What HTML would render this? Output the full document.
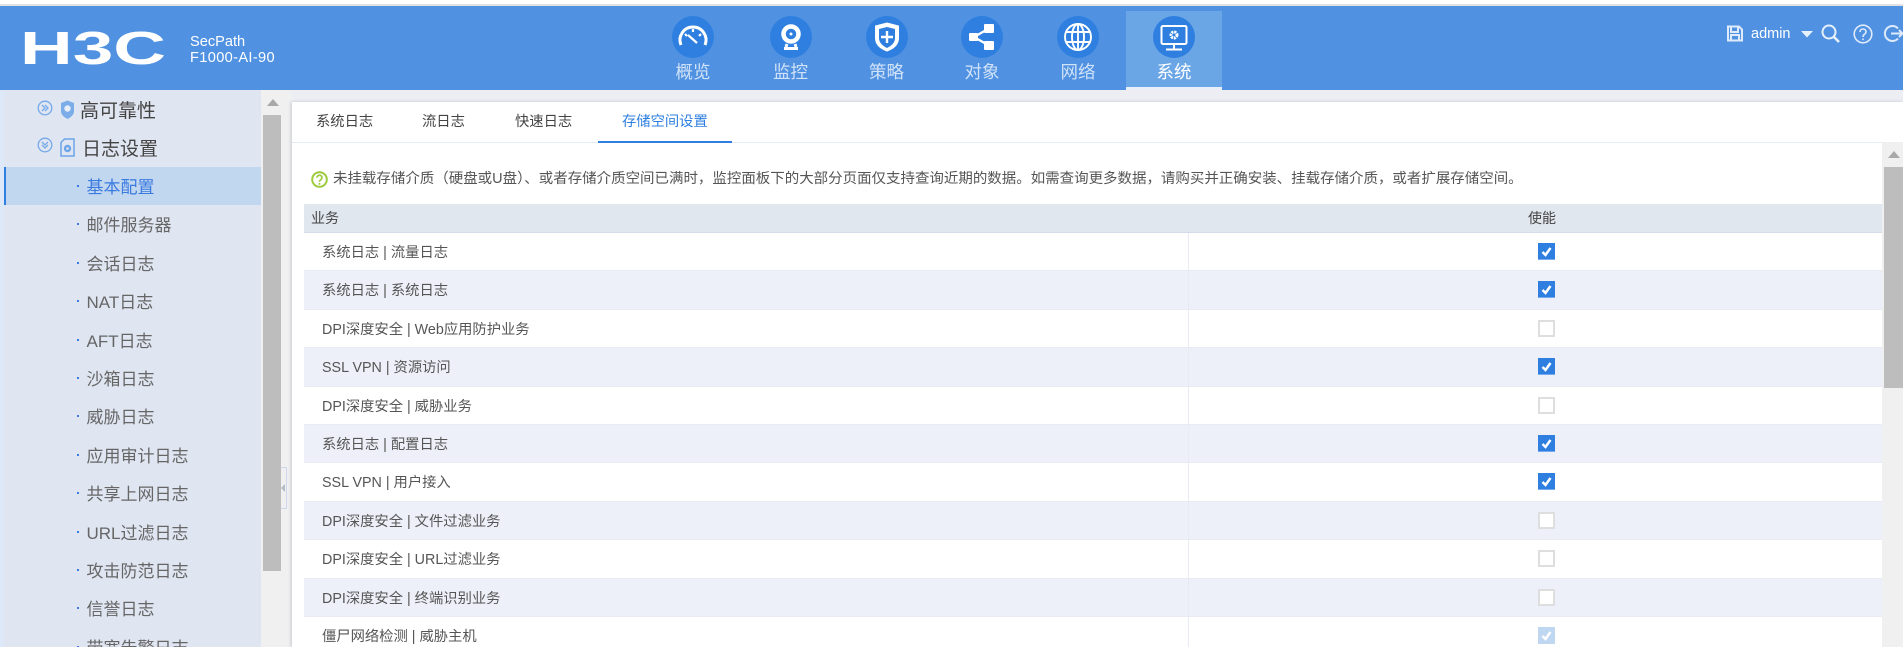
<!DOCTYPE html>
<html lang="zh"><head><meta charset="utf-8"><title>H3C SecPath</title>
<style>
*{box-sizing:border-box}
html,body{margin:0;padding:0;width:1903px;height:647px;overflow:hidden;background:#fff;font-family:"Liberation Sans","Noto Sans CJK SC",sans-serif}
body{position:relative}
.a{position:absolute}
#top{left:0;top:4px;width:1903px;height:2px;background:#e2e2e2}
#hd{left:0;top:6px;width:1903px;height:84px;background:#5092e1}
.nav{position:absolute;top:11px;width:96px;height:79px;text-align:center;color:#cfe2f8;font-size:17.5px}
.nav.on{background:#6aa5e6;color:#fff;border-bottom:3px solid #e9eff8}
.nav i{position:absolute;left:27px;top:5px;width:42px;height:42px;border-radius:50%;background:#2e7fe0;display:block}
.nav svg{position:absolute;left:0;top:0}
.nav span{position:absolute;left:0;width:96px;top:48px;line-height:26px}
#bg{left:0;top:90px;width:1903px;height:557px;background:#eceef3}
#edge{left:0;top:90px;width:4px;height:557px;background:#dde8f8}
#side{left:4px;top:90px;width:257px;height:557px;background:#dfe5f1;overflow:hidden}
.it{position:absolute;left:0;width:257px;height:38px;line-height:41.500px;font-size:17px;color:#666;padding-left:82.500px}
.it:before{content:"";position:absolute;left:73px;top:18px;width:2px;height:2px;background:#3b7be0}
.it.on{background:#c1d6ef;color:#3b7be0;border-left:2px solid #2e7fe0;padding-left:80.500px}
.it.on:before{left:71px}
.l1{position:absolute;font-size:19px;color:#444;line-height:26px}
#sb1{left:261px;top:90px;width:31px;height:557px;background:#f0f0f0}
#thumb1{left:263px;top:115px;width:18px;height:456px;background:#bdbdbd}
#card{left:292px;top:102px;width:1611px;height:545px;background:#fff;box-shadow:-1px 0 3px rgba(120,130,150,.35)}
.tab{position:absolute;top:110px;font-size:14.300px;line-height:24px;color:#444}
#tl{left:292px;top:142px;width:1611px;height:1px;background:#e6ecf3}
#ul{left:598px;top:141px;width:134px;height:2px;background:#2e7fe0}
#note{left:333px;top:169px;font-size:14.470px;line-height:20px;color:#555;white-space:nowrap}
#th{left:304px;top:204px;width:1578px;height:29px;background:#e1e7ef;border-bottom:1px solid #d5dbe8;font-size:14px;line-height:29px;color:#444}
#rows{left:304px;top:233px;width:1578px;height:414px;overflow:hidden}
.r{height:38.400px;line-height:41px;font-size:14.300px;color:#555;padding-left:18px;border-bottom:1px solid #e8ecf2;position:relative;white-space:nowrap}
.r:nth-child(even){background:#edf0f8}
.r:last-child{height:40px;border-bottom:0}
.r:after{content:"";position:absolute;left:884px;top:0;bottom:0;width:1px;background:#e8ecf2}
.c{position:absolute;left:1234px;top:10px;width:17px;height:17px;border:2px solid #dedede;background:#fff}
.c.y{background:#2e7fe0;border:0;border-bottom:1px solid #74aaf0}
.c.d{background:#c0d7f2;border:0}
.c svg{position:absolute;left:0;top:0}
#sb2{left:1882px;top:142px;width:21px;height:505px;background:#f0f0f0}
#thumb2{left:1884px;top:167px;width:19px;height:221px;background:#bdbdbd}
</style></head><body>
<div class="a" id="top"></div>
<div class="a" id="hd"></div>

<svg class="a" style="left:20px;top:28px" width="150" height="40" viewBox="0 0 150 40"><text x="0" y="36" font-family="Liberation Sans" font-weight="700" font-size="46" fill="#fff" textLength="146" lengthAdjust="spacingAndGlyphs">H3C</text></svg>
<div class="a" style="left:190px;top:33.500px;font-size:14.600px;line-height:16.500px;color:#fff;white-space:nowrap">SecPath<br><span style="letter-spacing:.35px">F1000-AI-90</span></div>

<div class="nav" style="left:645px"><i></i><svg width="96" height="50" fill="none" stroke="#fff" stroke-width="2.200"><path d="M36 34a13 13 0 1 1 24 0" stroke-width="3"/><path d="M40 23l2 2M48 18v3M56 23l-2 2M43 24l9 8" stroke-width="2.200"/></svg><span>概览</span></div>
<div class="nav" style="left:742.500px"><i></i><svg width="96" height="50" fill="none" stroke="#fff"><circle cx="48" cy="23" r="7.500" stroke-width="4.500"/><circle cx="48" cy="23" r="1.500" fill="#fff" stroke="none"/><path d="M44 33l-1 3M52 33l1 3M41 37.500h14" stroke-width="3"/></svg><span>监控</span></div>
<div class="nav" style="left:838.500px"><i></i><svg width="96" height="50" fill="none" stroke="#fff"><path d="M36.500 15l11.500-3 11.500 3v12c0 7-6 11-11.500 13-5.500-2-11.500-6-11.500-13z" fill="#fff"/><path d="M40 18l8-2 8 2v9c0 5-4 8-8 10-4-2-8-5-8-10z" fill="#2e7fe0" stroke="none"/><path d="M48 20v12M42 26h12" stroke="#fff" stroke-width="2.400"/></svg><span>策略</span></div>
<div class="nav" style="left:934px"><i></i><svg width="96" height="50" fill="#fff" stroke="#fff" stroke-width="2.400"><path d="M40 26l14-8M40 26l14 8" fill="none"/><rect x="35" y="22" width="9" height="8" rx="1" stroke="none"/><rect x="50" y="13" width="10" height="9" rx="1" stroke="none"/><rect x="50" y="30" width="10" height="9" rx="1" stroke="none"/></svg><span>对象</span></div>
<div class="nav" style="left:1030px"><i></i><svg width="96" height="50" fill="none" stroke="#fff" stroke-width="1.900"><circle cx="48" cy="26" r="13"/><ellipse cx="48" cy="26" rx="6" ry="13"/><path d="M48 13v26M36 21h24M36 31h24"/></svg><span>网络</span></div>
<div class="nav on" style="left:1126px"><i></i><svg width="96" height="50" fill="none" stroke="#fff" stroke-width="2"><rect x="35.500" y="15" width="25" height="18" rx="1.500"/><circle cx="48" cy="24" r="3" stroke-width="3" stroke-dasharray="2 .8"/><path d="M48 33v4.500M40 38.500h16"/></svg><span>系统</span></div>

<svg class="a" style="left:1727px;top:25px" width="16" height="17" fill="none" stroke="#dfeafa" stroke-width="2"><path d="M1 1.500h11l3 3v11H1zM4 2v5h7V2M4 15v-5h8v5"/></svg>
<div class="a" style="left:1751px;top:24px;font-size:14.500px;line-height:20px;color:#fff">admin</div>
<svg class="a" style="left:1800px;top:30px" width="14" height="8"><path d="M1 1h12L7 7.500z" fill="#e6f0fb"/></svg>
<svg class="a" style="left:1821px;top:24px" width="19" height="19" fill="none" stroke="#e6f0fb" stroke-width="2"><circle cx="8" cy="8" r="6.500"/><path d="M12.500 12.500L18 18" stroke-width="2.600"/></svg>
<svg class="a" style="left:1853px;top:24px" width="20" height="20" fill="none" stroke="#dfeafa" stroke-width="1.600"><circle cx="10" cy="10" r="8.800"/><path d="M7 8c0-4 6-4 6 0 0 2-3 2-3 5M10 14.500v1.600"/></svg>
<svg class="a" style="left:1883px;top:24px" width="20" height="19" fill="none" stroke="#dfeafa" stroke-width="2"><path d="M15 4.500a7.500 7.500 0 1 0 0 10M8 9.500h11"/><path d="M16 6l3.500 3.500L16 13"/></svg>

<div class="a" id="bg"></div>
<div class="a" id="edge"></div>
<div class="a" id="side">
<div class="it on" style="top:77px">基本配置</div>
<div class="it" style="top:115px">邮件服务器</div>
<div class="it" style="top:154px">会话日志</div>
<div class="it" style="top:192px">NAT日志</div>
<div class="it" style="top:231px">AFT日志</div>
<div class="it" style="top:269px">沙箱日志</div>
<div class="it" style="top:307px">威胁日志</div>
<div class="it" style="top:346px">应用审计日志</div>
<div class="it" style="top:384px">共享上网日志</div>
<div class="it" style="top:423px">URL过滤日志</div>
<div class="it" style="top:461px">攻击防范日志</div>
<div class="it" style="top:499px">信誉日志</div>
<div class="it" style="top:538px">带宽告警日志</div>
</div>
<svg class="a" style="left:37px;top:100px" width="16" height="16" fill="none" stroke="#76a9ea" stroke-width="1.300"><circle cx="8" cy="8" r="6.800"/><path d="M5 5l3 3-3 3M8 5l3 3-3 3"/></svg>
<svg class="a" style="left:60px;top:100px" width="15" height="19"><path d="M1 3l6.500-2.500L14 3v8c0 4-3 6-6.500 8C4 17 1 15 1 11z" fill="#7bade9"/><circle cx="7.500" cy="8.500" r="3.200" fill="#e8eef8"/></svg>
<div class="l1" style="left:80px;top:98.500px">高可靠性</div>
<svg class="a" style="left:37px;top:137px" width="16" height="16" fill="none" stroke="#76a9ea" stroke-width="1.300"><circle cx="8" cy="8" r="6.800"/><path d="M5 5l3 3 3-3M5 8l3 3 3-3"/></svg>
<svg class="a" style="left:60px;top:138px" width="15" height="19" fill="none" stroke="#6ea5e8" stroke-width="1.500"><path d="M4.500 1H14v17H1V4.500z"/><circle cx="7.500" cy="10.500" r="2.500" stroke-width="2.400"/></svg>
<div class="l1" style="left:82px;top:136.500px">日志设置</div>

<div class="a" id="sb1"></div>
<svg class="a" style="left:267px;top:99px" width="12" height="8"><path d="M0 7L6 0l6 7z" fill="#a8a8a8"/></svg>
<div class="a" id="thumb1"></div>
<div class="a" style="left:281px;top:467px;width:6px;height:42px;border:1px solid #cdd8ef;border-left:0;background:#f0f0f0"></div>
<svg class="a" style="left:281px;top:484px" width="5" height="8"><path d="M4 0v8L0 4z" fill="#b4bcc8"/></svg>

<div class="a" id="card"></div>
<div class="tab" style="left:316px">系统日志</div>
<div class="tab" style="left:422px">流日志</div>
<div class="tab" style="left:515px">快速日志</div>
<div class="tab" style="left:622px;color:#2e7fe0">存储空间设置</div>
<div class="a" id="tl"></div><div class="a" id="ul"></div>

<svg class="a" style="left:311px;top:171px" width="17" height="17" fill="none" stroke="#9ccb3c" stroke-width="2"><circle cx="8.500" cy="8.500" r="7.300"/><path d="M6 6.800c0-3.400 5-3.400 5 0 0 1.800-2.500 1.700-2.500 4M8.500 12v1.800" stroke-width="1.700"/></svg>
<div class="a" id="note">未挂载存储介质（硬盘或U盘）、或者存储介质空间已满时，监控面板下的大部分页面仅支持查询近期的数据。如需查询更多数据，请购买并正确安装、挂载存储介质，或者扩展存储空间。</div>

<div class="a" id="th"><span class="a" style="left:7px">业务</span><span class="a" style="left:1224px">使能</span></div>
<div class="a" id="rows">
<div class="r">系统日志 | 流量日志<span class="c y"><svg width="17" height="17"><path d="M4.500 9l3 3 5-7" fill="none" stroke="#fff" stroke-width="2.500"/></svg></span></div>
<div class="r">系统日志 | 系统日志<span class="c y"><svg width="17" height="17"><path d="M4.500 9l3 3 5-7" fill="none" stroke="#fff" stroke-width="2.500"/></svg></span></div>
<div class="r">DPI深度安全 | Web应用防护业务<span class="c"></span></div>
<div class="r">SSL VPN | 资源访问<span class="c y"><svg width="17" height="17"><path d="M4.500 9l3 3 5-7" fill="none" stroke="#fff" stroke-width="2.500"/></svg></span></div>
<div class="r">DPI深度安全 | 威胁业务<span class="c"></span></div>
<div class="r">系统日志 | 配置日志<span class="c y"><svg width="17" height="17"><path d="M4.500 9l3 3 5-7" fill="none" stroke="#fff" stroke-width="2.500"/></svg></span></div>
<div class="r">SSL VPN | 用户接入<span class="c y"><svg width="17" height="17"><path d="M4.500 9l3 3 5-7" fill="none" stroke="#fff" stroke-width="2.500"/></svg></span></div>
<div class="r">DPI深度安全 | 文件过滤业务<span class="c"></span></div>
<div class="r">DPI深度安全 | URL过滤业务<span class="c"></span></div>
<div class="r">DPI深度安全 | 终端识别业务<span class="c"></span></div>
<div class="r">僵尸网络检测 | 威胁主机<span class="c d"><svg width="17" height="17"><path d="M4.500 9l3 3 5-7" fill="none" stroke="#fff" stroke-width="2.500"/></svg></span></div>
</div>

<div class="a" id="sb2"></div>
<svg class="a" style="left:1888px;top:151px" width="12" height="8"><path d="M0 7L6 0l6 7z" fill="#a8a8a8"/></svg>
<div class="a" id="thumb2"></div>
</body></html>
